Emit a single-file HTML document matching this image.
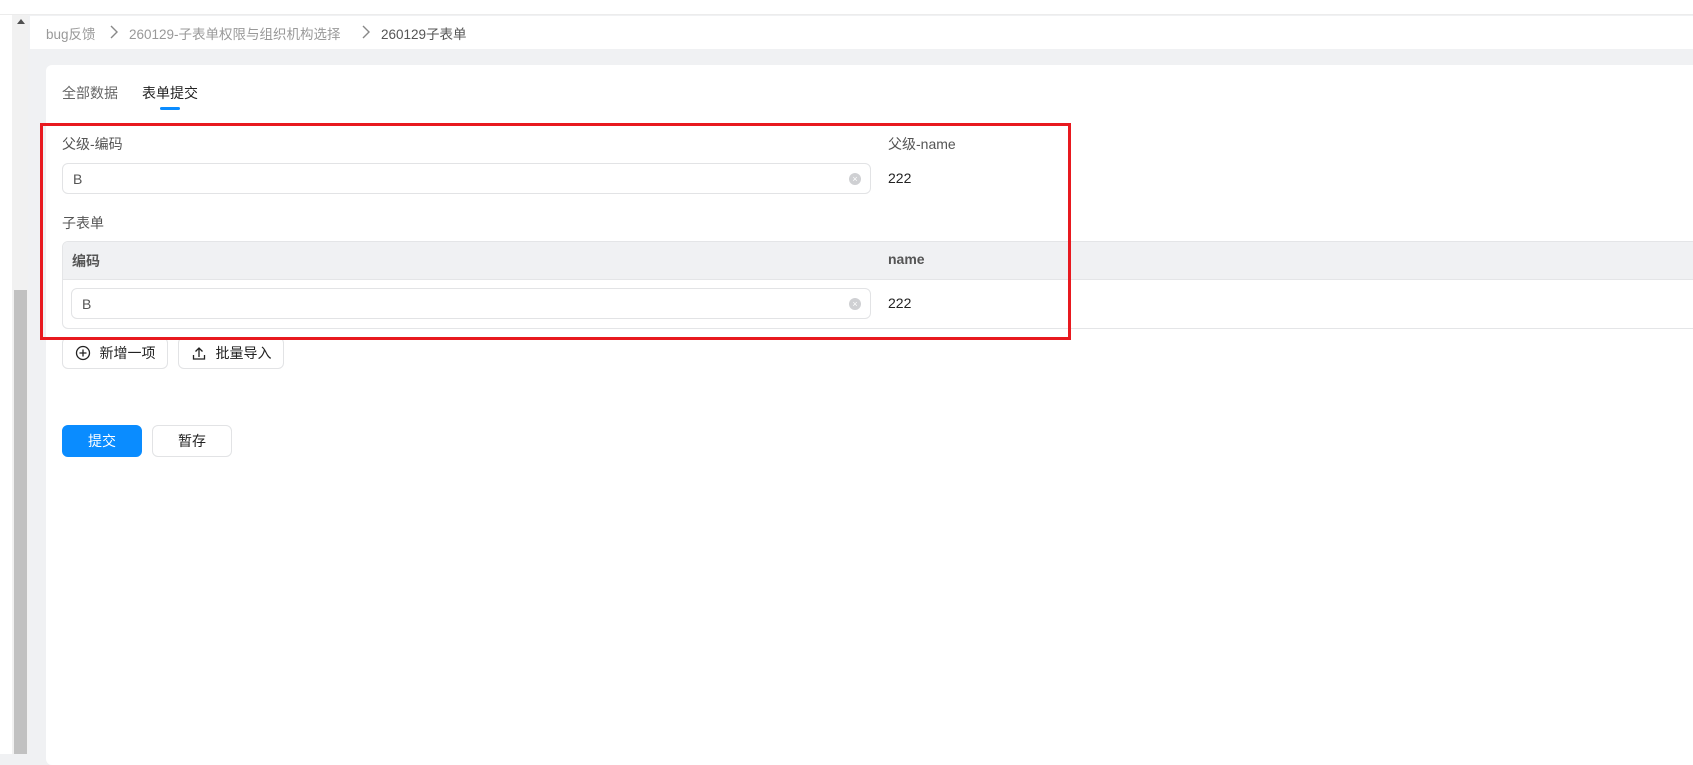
<!DOCTYPE html>
<html><head><meta charset="utf-8"><style>
*{box-sizing:border-box;margin:0;padding:0}
body{width:1693px;height:754px;overflow:hidden;background:#f0f1f3;position:relative;font-family:"Liberation Sans","Noto Sans CJK SC",sans-serif;font-size:14px;color:#555}
.a{position:absolute}
.inp{position:absolute;border:1px solid #e2e3e5;border-radius:6px;background:#fff;height:31px}
.inp span{position:absolute;left:10px;top:7px;color:#555;font-size:14px}
.clr{position:absolute;width:12px;height:12px;border-radius:50%;background:#cfd0d3;color:#fff;font-size:9px;line-height:12px;text-align:center}
.btn{position:absolute;border:1px solid #e2e3e5;border-radius:6px;background:#fff;height:32px;font-size:14px;color:#222;display:flex;align-items:center;justify-content:center}
</style></head><body>
<div class="a" style="left:0;top:0;width:1693px;height:15px;background:#fff;border-bottom:1px solid #ececec"></div>
<div class="a" style="left:0;top:15px;width:12px;height:739px;background:#fff"></div>
<div class="a" style="left:12px;top:15px;width:16px;height:739px;background:#f1f1f1"></div>
<div class="a" style="left:17px;top:19px;width:0;height:0;border-left:4px solid transparent;border-right:4px solid transparent;border-bottom:5px solid #505050"></div>
<div class="a" style="left:14px;top:290px;width:13px;height:464px;background:#c1c1c1"></div>
<div class="a" style="left:30px;top:16px;width:1663px;height:33px;background:#fff"></div>
<div class="a" style="left:46px;top:23px;font-size:13.5px;color:#999;white-space:nowrap">bug反馈</div>
<svg class="a" style="left:109px;top:25px" width="10" height="14"><path d="M2 1l6 6-6 6" fill="none" stroke="#888" stroke-width="1.4"/></svg>
<div class="a" style="left:129px;top:23px;font-size:13.5px;color:#999;white-space:nowrap">260129-子表单权限与组织机构选择</div>
<svg class="a" style="left:361px;top:25px" width="10" height="14"><path d="M2 1l6 6-6 6" fill="none" stroke="#888" stroke-width="1.4"/></svg>
<div class="a" style="left:381px;top:23px;font-size:13.5px;color:#555;white-space:nowrap">260129子表单</div>

<div class="a" style="left:46px;top:65px;width:1660px;height:700px;background:#fff;border-radius:6px"></div>
<div class="a" style="left:62px;top:83px;color:#666">全部数据</div>
<div class="a" style="left:142px;top:83px;color:#222">表单提交</div>
<div class="a" style="left:160px;top:107px;width:20px;height:3px;border-radius:2px;background:#0a8cff"></div>

<div class="a" style="left:62px;top:134px">父级-编码</div>
<div class="inp" style="left:62px;top:163px;width:809px"><span>B</span><div class="clr" style="left:786px;top:9px">×</div></div>
<div class="a" style="left:888px;top:134px">父级-name</div>
<div class="a" style="left:888px;top:170px;color:#222">222</div>
<div class="a" style="left:62px;top:213px">子表单</div>

<div class="a" style="left:62px;top:241px;width:1640px;height:88px;border:1px solid #e4e5e7;border-radius:6px;overflow:hidden">
<div style="height:38px;background:#f0f1f3;border-bottom:1px solid #e4e5e7"></div>
</div>
<div class="a" style="left:72px;top:251px;font-weight:bold">编码</div>
<div class="a" style="left:888px;top:251px;font-weight:bold">name</div>
<div class="inp" style="left:71px;top:288px;width:800px"><span>B</span><div class="clr" style="left:777px;top:9px">×</div></div>
<div class="a" style="left:888px;top:295px;color:#222">222</div>

<div class="btn" style="left:62px;top:337px;width:106px"><svg width="16" height="16" style="margin-right:9px"><circle cx="8" cy="8" r="6.5" fill="none" stroke="#222" stroke-width="1.3"/><path d="M8 4.5v7M4.5 8h7" stroke="#222" stroke-width="1.3"/></svg>新增一项</div>
<div class="btn" style="left:178px;top:337px;width:106px"><svg width="16" height="16" style="margin-right:9px"><path d="M8 12V3M4.5 6.5L8 3l3.5 3.5M2.5 10v4h11v-4" fill="none" stroke="#222" stroke-width="1.3"/></svg>批量导入</div>

<div class="btn" style="left:62px;top:425px;width:80px;background:#0a8cff;border-color:#0a8cff;color:#fff">提交</div>
<div class="btn" style="left:152px;top:425px;width:80px">暂存</div>

<div class="a" style="left:40px;top:123px;width:1031px;height:217px;border:3px solid #e8191f"></div>
</body></html>
